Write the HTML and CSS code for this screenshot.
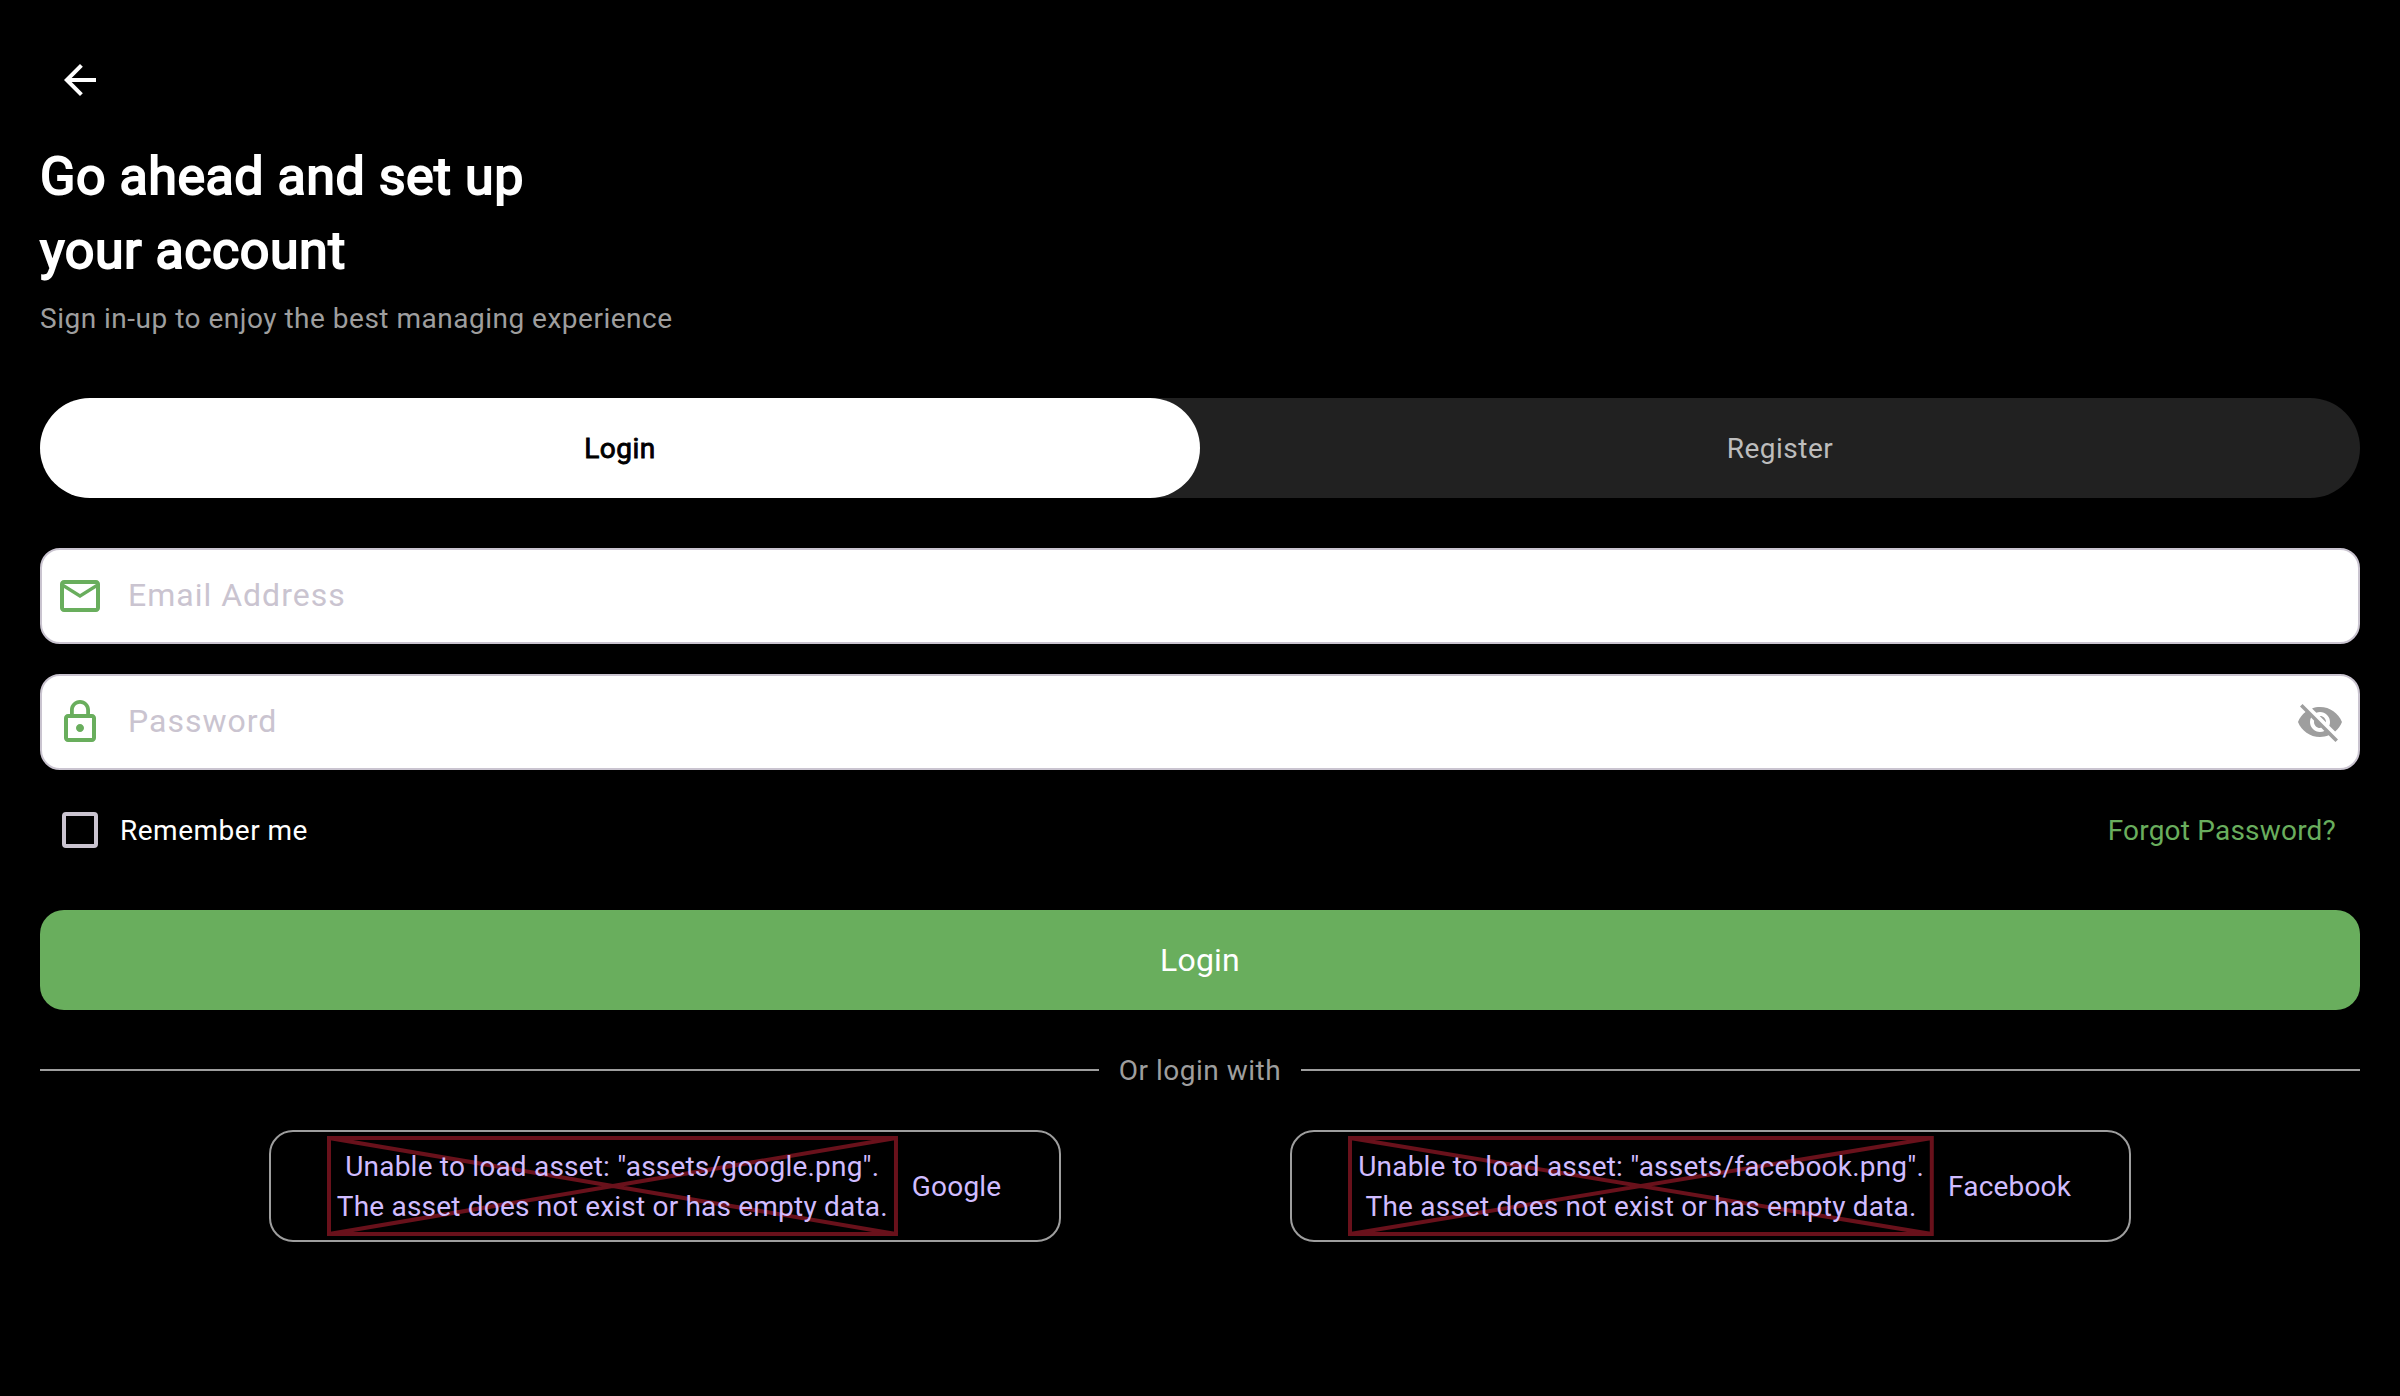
FILE: index.html
```html
<!DOCTYPE html>
<html lang="en">
<head>
<meta charset="utf-8">
<title>Login</title>
<link rel="stylesheet" href="styles.css">
</head>
<body>
<main class="page">
  <button class="back" aria-label="Back">
    <svg class="icon icon-back" viewBox="0 0 24 24"><path d="M20 11H7.83l5.59-5.59L12 4l-8 8 8 8 1.41-1.41L7.83 13H20v-2z"/></svg>
  </button>
  <h1 class="title">Go ahead and set up<br>your account</h1>
  <p class="subtitle">Sign in-up to enjoy the best managing experience</p>

  <div class="tabs">
    <button class="tab tab-active">Login</button>
    <button class="tab">Register</button>
  </div>

  <div class="field field-email">
    <svg class="icon icon-green" viewBox="0 0 24 24"><path d="M22 6c0-1.100-.9-2-2-2H4c-1.100 0-2 .9-2 2v12c0 1.100.9 2 2 2h16c1.100 0 2-.9 2-2V6zm-2 0l-8 5-8-5h16zm0 12H4V8l8 5 8-5v10z"/></svg>
    <span class="placeholder">Email Address</span>
  </div>
  <div class="field field-password">
    <svg class="icon icon-green" viewBox="0 0 24 24"><path d="M12 17c1.100 0 2-.9 2-2s-.9-2-2-2-2 .9-2 2 .9 2 2 2zm6-9h-1V6c0-2.760-2.240-5-5-5S7 3.240 7 6v2H6c-1.100 0-2 .9-2 2v10c0 1.100.9 2 2 2h12c1.100 0 2-.9 2-2V10c0-1.100-.9-2-2-2zM8.900 6c0-1.710 1.390-3.100 3.100-3.100s3.100 1.390 3.100 3.100v2H8.900V6zM18 20H6V10h12v10z"/></svg>
    <span class="placeholder">Password</span>
    <svg class="icon icon-grey" viewBox="0 0 24 24"><path d="M12 7c2.760 0 5 2.240 5 5 0 .65-.13 1.260-.36 1.830l2.920 2.920c1.510-1.260 2.700-2.890 3.430-4.750-1.730-4.390-6-7.500-11-7.500-1.400 0-2.740.25-3.980.7l2.160 2.160C10.740 7.130 11.350 7 12 7zM2 4.270l2.280 2.280.46.46C3.080 8.300 1.780 10.020 1 12c1.730 4.390 6 7.500 11 7.500 1.550 0 3.030-.3 4.380-.84l.42.42L19.730 22 21 20.730 3.270 3 2 4.270zM7.530 9.800l1.550 1.550c-.05.21-.08.43-.08.65 0 1.660 1.340 3 3 3 .22 0 .44-.03.65-.08l1.550 1.550c-.67.33-1.410.53-2.200.53-2.760 0-5-2.240-5-5 0-.79.2-1.530.53-2.200zm4.310-.78l3.150 3.150.02-.16c0-1.660-1.340-3-3-3l-.17.01z"/></svg>
  </div>

  <div class="options">
    <span class="remember"><span class="check-area"><span class="checkbox"></span></span><span class="label">Remember me</span></span>
    <a class="forgot label">Forgot Password?</a>
  </div>

  <button class="submit">Login</button>

  <div class="divider"><span class="line"></span><span class="label">Or login with</span><span class="line"></span></div>

  <div class="socials">
    <button class="social">
      <span class="broken">
        <svg class="cross" viewBox="0 0 100 100" preserveAspectRatio="none"><path d="M0 0H100V100H0ZM0 0L100 100M100 0L0 100"/></svg>
        <span class="broken-text">Unable to load asset: "assets/google.png".<br>The asset does not exist or has empty data.</span>
      </span>
      <span class="label">Google</span>
    </button>
    <button class="social">
      <span class="broken">
        <svg class="cross" viewBox="0 0 100 100" preserveAspectRatio="none"><path d="M0 0H100V100H0ZM0 0L100 100M100 0L0 100"/></svg>
        <span class="broken-text">Unable to load asset: "assets/facebook.png".<br>The asset does not exist or has empty data.</span>
      </span>
      <span class="label">Facebook</span>
    </button>
  </div>
</main>
</body>
</html>
```
FILE: styles.css
```css
* { box-sizing: border-box; }
body {
  margin: 0;
  background: #000;
  color: #fff;
  font: 400 28px/40px Roboto, "Liberation Sans", sans-serif;
  letter-spacing: 0.5px;
}
button {
  margin: 0;
  padding: 0;
  border: 0;
  background: none;
  color: inherit;
  font: inherit;
  letter-spacing: inherit;
}
.page {
  display: flex;
  flex-direction: column;
  min-height: 1396px;
  padding: 40px;
}
.icon { display: block; width: 48px; height: 48px; flex: none; }
.icon-back { fill: #fff; }
.icon-green { fill: #69ae5d; }
.icon-grey { fill: #9e9e9e; }
.label { padding-top: 2px; }
.back {
  display: grid;
  place-items: center;
  width: 80px;
  height: 80px;
}
.title {
  margin: 20px 0 0;
  font-size: 52px;
  font-weight: 400;
  line-height: 74px;
  -webkit-text-stroke: 1.9px #fff;
}
.subtitle { margin: 11px 0 0; color: #9e9e9e; }
.tabs {
  display: flex;
  height: 100px;
  margin-top: 59px;
  border-radius: 50px;
  background: #212121;
}
.tab { flex: 1; padding-top: 2px; border-radius: 50px; color: #bdbdbd; }
.tab-active { background: #fff; color: #000; -webkit-text-stroke: 0.9px #000; }
.field {
  display: flex;
  align-items: center;
  height: 96px;
  padding: 0 14px;
  border: 2px solid #cac4d0;
  border-radius: 20px;
  background: #fff;
}
.field-email { margin-top: 50px; }
.field-password { margin-top: 30px; }
.placeholder {
  flex: 1;
  margin-left: 24px;
  padding-bottom: 2px;
  color: #cac4d0;
  font-size: 32px;
  line-height: 48px;
  letter-spacing: 1px;
}
.options {
  display: flex;
  align-items: center;
  justify-content: space-between;
  height: 80px;
  margin-top: 20px;
  padding-right: 24px;
}
.remember { display: flex; align-items: center; }
.check-area { display: grid; place-items: center; width: 80px; height: 80px; }
.checkbox { width: 36px; height: 36px; border: 4px solid #cac4d0; border-radius: 4px; }
.forgot { color: #69ae5d; letter-spacing: 0.2px; }
.submit {
  height: 100px;
  margin-top: 40px;
  border-radius: 24px;
  background: #69ae5d;
  font-size: 32px;
  letter-spacing: 0.2px;
}
.divider {
  display: flex;
  align-items: center;
  gap: 20px;
  height: 40px;
  margin-top: 40px;
  color: #9e9e9e;
}
.line { flex: 1; height: 2px; background: #9e9e9e; }
.socials { display: flex; justify-content: space-evenly; margin-top: 40px; }
.social {
  display: flex;
  align-items: center;
  gap: 16px;
  height: 112px;
  padding: 0 58px;
  border: 2px solid #9e9e9e;
  border-radius: 24px;
  color: #d0bcff;
  letter-spacing: 0.2px;
}
.broken { position: relative; padding: 9px 8px 7px; }
.broken-text { position: relative; display: block; text-align: center; white-space: nowrap; }
.cross { position: absolute; inset: 0; width: 100%; height: 100%; overflow: visible; }
.cross path { fill: none; stroke: #69111b; stroke-width: 4px; vector-effect: non-scaling-stroke; }
```
